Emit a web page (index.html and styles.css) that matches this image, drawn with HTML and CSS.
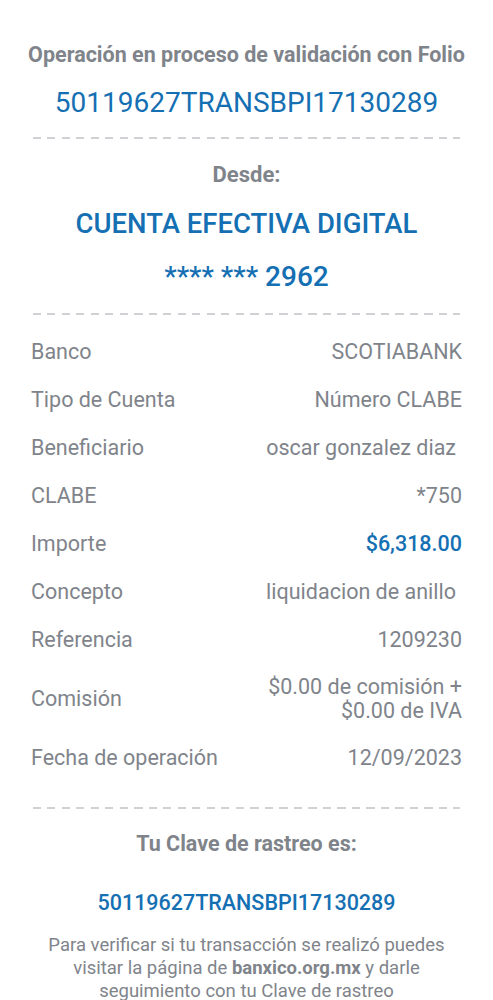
FILE: index.html
```html
<!DOCTYPE html>
<html lang="es">
<head>
  <meta charset="UTF-8" />
  <title>Comprobante de transferencia</title>
  <link rel="stylesheet" href="styles.css">
</head>
<body>
  <div class="receipt">
    <h2 class="title">Operación en proceso de validación con Folio</h2>
    <div class="folio">50119627TRANSBPI17130289</div>

    <div class="dash"></div>

    <h3 class="from-label">Desde:</h3>
    <div class="account">CUENTA EFECTIVA DIGITAL</div>
    <div class="account-num">**** *** 2962</div>

    <div class="dash dash-rows"></div>

    <div class="rows">
      <div class="row"><span>Banco</span><span>SCOTIABANK</span></div>
      <div class="row"><span>Tipo de Cuenta</span><span>Número CLABE</span></div>
      <div class="row"><span>Beneficiario</span><span class="pad">oscar gonzalez diaz</span></div>
      <div class="row"><span>CLABE</span><span>*750</span></div>
      <div class="row"><span>Importe</span><span class="amount">$6,318.00</span></div>
      <div class="row"><span>Concepto</span><span class="pad">liquidacion de anillo</span></div>
      <div class="row"><span>Referencia</span><span>1209230</span></div>
      <div class="row"><span>Comisión</span><span class="multi">$0.00 de comisión +<br/>$0.00 de IVA</span></div>
      <div class="row"><span>Fecha de operación</span><span>12/09/2023</span></div>
    </div>

    <div class="dash dash-end"></div>

    <h3 class="track-label">Tu Clave de rastreo es:</h3>
    <div class="track">50119627TRANSBPI17130289</div>
    <p class="note">Para verificar si tu transacción se realizó puedes visitar la página de <strong>banxico.org.mx</strong> y darle seguimiento con tu Clave de rastreo</p>
  </div>
</body>
</html>
```

FILE: styles.css
```css
body {
  margin: 0;
  background: #fff;
  font-family: Roboto, "Liberation Sans", Arial, sans-serif;
  color: #7f848b;
}
.receipt {
  padding: 41px 31px 0;
  text-align: center;
}
.title {
  margin: 0 -12px;
  font-size: 21.5px;
  line-height: 28px;
  font-weight: 700;
  white-space: nowrap;
}
.folio {
  margin-top: 18px;
  font-size: 28px;
  line-height: 32px;
  color: #1570b3;
}
.dash {
  height: 2px;
  margin: 18px 2px 0;
  background: repeating-linear-gradient(to right, #cfd1d4 0 8px, transparent 8px 14.5px);
}
.from-label {
  margin: 23px 0 0;
  font-size: 22px;
  line-height: 26px;
  font-weight: 700;
}
.account {
  margin-top: 20px;
  font-size: 27.5px;
  line-height: 32px;
  font-weight: 500;
  color: #1570b3;
}
.account-num {
  margin-top: 21px;
  font-size: 28px;
  line-height: 32px;
  font-weight: 500;
  color: #1570b3;
}
.dash-rows {
  margin-top: 20px;
}
.rows {
  margin-top: 13px;
}
.row {
  display: flex;
  justify-content: space-between;
  align-items: center;
  padding: 11px 0;
  font-size: 21.5px;
  line-height: 26px;
}
.row span:last-child {
  text-align: right;
}
.row .pad {
  padding-right: 6px;
}
.row .multi {
  line-height: 24px;
}
.amount {
  color: #1570b3;
  font-weight: 500;
}
.dash-end {
  margin-top: 25px;
}
.track-label {
  margin: 22px 0 0;
  font-size: 21.5px;
  line-height: 26px;
  font-weight: 700;
}
.track {
  margin-top: 33px;
  font-size: 21.5px;
  line-height: 26px;
  font-weight: 500;
  color: #1570b3;
}
.note {
  margin: 18px 10px 0;
  font-size: 18.5px;
  line-height: 23px;
}
.note strong {
  font-weight: 700;
}
```
